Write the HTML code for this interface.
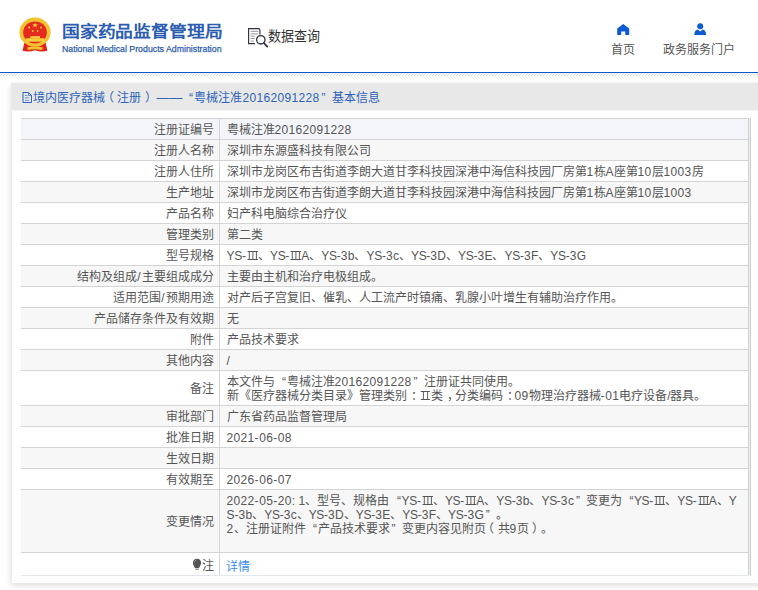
<!DOCTYPE html>
<html lang="zh-CN">
<head>
<meta charset="utf-8">
<style>
*{margin:0;padding:0;box-sizing:border-box}
html,body{width:758px;height:590px;overflow:hidden;background:#fff}
body{font-family:"Liberation Sans",sans-serif;color:#555;position:relative;text-spacing-trim:space-all}
.abs{position:absolute}
#hdr{position:absolute;left:0;top:0;width:758px;height:72px;background:#fff}
#blue{position:absolute;left:0;top:72px;width:758px;height:1px;background:#005bc5}

.title{position:absolute;left:62px;top:21px;font-size:18px;font-weight:bold;color:#2b5cb0;white-space:nowrap;line-height:24px;transform:scale(0.99,0.88);transform-origin:0 0}
.sub{position:absolute;left:62px;top:42.5px;font-size:9.6px;color:#2b5cb0;white-space:nowrap;line-height:12px;transform:scaleX(0.915);transform-origin:0 0;-webkit-text-stroke:0.25px #2b5cb0}
.sjcx{position:absolute;left:268px;top:26.5px;font-size:13px;transform:scaleY(1.06);transform-origin:0 0;color:#333;white-space:nowrap;line-height:18px}
.nav{position:absolute;font-size:12px;color:#555;white-space:nowrap;line-height:16px}
#panel{position:absolute;left:11px;top:83px;width:760px;height:500px;background:#fff;border-left:1px solid #ececec;box-shadow:0 1.5px 6px rgba(0,0,0,.15)}
#ph{position:absolute;left:-1px;top:0;width:761px;height:28px;background:#e8e8e8;border-bottom:1px solid #f4f6fa}
#ph .t{position:absolute;left:22px;top:7px;font-size:12px;color:#2d63b8;white-space:nowrap;line-height:16px}
table{position:absolute;left:21px;top:118px;border-collapse:collapse;width:728px;table-layout:fixed}
td{font-size:12px;line-height:14px;padding:4px 0 2px;white-space:nowrap;border-top:1px solid #d4d4d4;vertical-align:middle;overflow:hidden}
td.l{text-align:right;padding-right:5px;width:198px;border-right:1px solid #d4d4d4}
td.v{padding-left:7px}
tr.g td{background:#f7f7f7}
tr.h td{background:#f3f5fa}
tr.last td{border-bottom:1px solid #e3e7ee;padding-top:6px;padding-bottom:2px}
#rb1{position:absolute;left:748px;top:118px;width:1px;height:457px;background:#d0d0d0}
#rb1b{position:absolute;left:749px;top:118px;width:1px;height:457px;background:#e8ecf4}
#rb2{position:absolute;left:750px;top:118px;width:1px;height:458px;background:#d0d0d0}
a{color:#3b8cf2;text-decoration:none;position:relative;top:1px;left:-0.5px}
.dsh{display:inline-block;width:29.6px;padding-left:3.6px;font-size:12.8px}
.hq{display:inline-block;width:11.9px;text-align:right;padding-right:1.5px}
.lp{position:relative;left:-3.5px}
.rp{position:relative;left:3.5px}
.rn{display:inline-block;vertical-align:baseline}
.cp{position:relative;left:4px}
.sl{margin:0 0.8px}
.d{letter-spacing:0.33px}
.hy{letter-spacing:0.6px}
.ys{letter-spacing:-0.3px}
.lq{display:inline-block;width:12px;text-align:right;padding-right:0.5px}
.rq{display:inline-block;width:12px;text-align:left;padding-left:2px}
</style>
</head>
<body>
<div id="hdr">
  <svg class="abs" style="left:0;top:0" width="60" height="60" viewBox="0 0 60 60">
    <path d="M24.5 42 L22.6 50.8 Q29 52.5 35 50.2 Q41 52.5 47.4 50.8 L45.5 42 Z" fill="#e0251b"/>
    <ellipse cx="35" cy="32.2" rx="15.6" ry="14.6" fill="#f3c230"/>
    <ellipse cx="35" cy="32.4" rx="11.8" ry="11" fill="#e42a1f"/>
    <path d="M35.1 22.4 l0.75 1.9 h2.0 l-1.6 1.2 0.6 2 -1.75 -1.2 -1.75 1.2 0.6 -2 -1.6 -1.2 h2.0z" fill="#f6cf3a"/>
    <circle cx="29.2" cy="27.5" r="0.9" fill="#f6cf3a"/><circle cx="41" cy="27.5" r="0.9" fill="#f6cf3a"/>
    <circle cx="32.7" cy="31" r="0.9" fill="#f6cf3a"/><circle cx="37.6" cy="31" r="0.9" fill="#f6cf3a"/>
    <rect x="30.3" y="36.2" width="9.7" height="2.2" fill="#f6cf3a"/>
    <rect x="26.1" y="38.3" width="18.1" height="3.4" fill="#f6cf3a"/>
    <path d="M27 47.5 Q35 45.5 43 47.5 L42 50 Q35 48.5 28 50 Z" fill="#f3c230"/>
  </svg>
  <div class="title">国家药品监督管理局</div>
  <div class="sub">National Medical Products Administration</div>
  <svg class="abs" style="left:240px;top:20px" width="40" height="35" viewBox="240 20 40 35">
    <path d="M259.9 34.5 V30 Q259.9 28.6 258.5 28.6 H248.6 V43.6 H255" fill="none" stroke="#2e2f40" stroke-width="1.15"/>
    <path d="M250.6 31.3h7.6M250.6 33.9h7.6M250.6 36.2h4.2M250.6 38.5h4.2M250.6 41.1h3.2" stroke="#8a8a92" stroke-width="0.9"/>
    <circle cx="260.8" cy="39.8" r="4.2" fill="#fff" stroke="#2e2f40" stroke-width="1.3"/>
    <path d="M263.9 43 L267.2 46.6" stroke="#2e2f40" stroke-width="1.8" stroke-linecap="round"/>
  </svg>
  <div class="sjcx">数据查询</div>
  <svg class="abs" style="left:617px;top:24px" width="13" height="11" viewBox="0 0 13 11">
    <path d="M6.2 0 L12.2 4.5 V11 H8.2 V7.5 H4.2 V11 H0.2 V4.5 Z" fill="#0d5bd0"/>
  </svg>
  <div class="nav" style="left:611px;top:41.5px">首页</div>
  <svg class="abs" style="left:694px;top:23px" width="13" height="12" viewBox="0 0 13 12">
    <circle cx="6.2" cy="3.2" r="3" fill="#0d5bd0"/>
    <path d="M0.2 12 Q0.5 7 4 6.6 L6.2 8.5 L8.4 6.6 Q12 7 12.2 12Z" fill="#0d5bd0"/>
  </svg>
  <div class="nav" style="left:663px;top:41.5px">政务服务门户</div>
</div>
<div id="blue"></div>
<svg id="dash" style="position:absolute;left:0;top:73px" width="758" height="3"><defs><pattern id="dp" patternUnits="userSpaceOnUse" width="3" height="3"><path d="M0.2 3 L2.8 0.4" stroke="#c8c8c8" stroke-width="0.9"/></pattern></defs><rect x="0" y="0" width="758" height="3" fill="url(#dp)"/></svg>
<div id="panel">
  <div id="ph">
    <svg class="abs" style="left:7px;top:5px" width="16" height="20" viewBox="18 88 16 20">
      <path d="M23 92.5 H28.6 L31.5 95.4 V102.5 H23 Z" fill="none" stroke="#2a63c8" stroke-width="1"/>
      <path d="M28.6 92.5 V95.4 H31.5" fill="none" stroke="#2a63c8" stroke-width="0.8"/>
      <path d="M25 95.5h2.5M25 97.8h4M25 100.3h4" stroke="#6d86c4" stroke-width="0.9"/>
    </svg>
    <div class="t">境内医疗器械<span class="lp">（</span>注册<span class="rp">）</span><span class="dsh">——</span><span class="hq">“</span>粤械注准<span class="d">20162091228</span><span class="rq">”</span>基本信息</div>
  </div>
</div>
<table>
<tr class="h"><td class="l">注册证编号</td><td class="v">粤械注准<span class="d">20162091228</span></td></tr>
<tr class="g"><td class="l">注册人名称</td><td class="v">深圳市东源盛科技有限公司</td></tr>
<tr><td class="l">注册人住所</td><td class="v">深圳市龙岗区布吉街道李朗大道甘李科技园深港中海信科技园厂房第<span class="d">1</span>栋A座第<span class="d">10</span>层<span class="d">1003</span>房</td></tr>
<tr class="g"><td class="l">生产地址</td><td class="v">深圳市龙岗区布吉街道李朗大道甘李科技园深港中海信科技园厂房第<span class="d">1</span>栋A座第<span class="d">10</span>层<span class="d">1003</span></td></tr>
<tr><td class="l">产品名称</td><td class="v">妇产科电脑综合治疗仪</td></tr>
<tr class="g"><td class="l">管理类别</td><td class="v">第二类</td></tr>
<tr><td class="l">型号规格</td><td class="v"><span class="ys">YS</span>-<svg class="rn" width="12" height="9" viewBox="0 0 12 9"><path d="M1.6 0.5H11.9M1.6 8.5H11.9" stroke="#555" stroke-width="1"/><path d="M3.3 0.5V8.5M6.9 0.5V8.5M10.4 0.5V8.5" stroke="#555" stroke-width="0.95"/></svg>、<span class="ys">YS</span>-<svg class="rn" width="12" height="9" viewBox="0 0 12 9"><path d="M1.6 0.5H11.9M1.6 8.5H11.9" stroke="#555" stroke-width="1"/><path d="M3.3 0.5V8.5M6.9 0.5V8.5M10.4 0.5V8.5" stroke="#555" stroke-width="0.95"/></svg>A、<span class="ys">YS</span>-<span class="d">3</span>b、<span class="ys">YS</span>-<span class="d">3</span>c、<span class="ys">YS</span>-<span class="d">3</span>D、<span class="ys">YS</span>-<span class="d">3</span>E、<span class="ys">YS</span>-<span class="d">3</span>F、<span class="ys">YS</span>-<span class="d">3</span>G</td></tr>
<tr class="g"><td class="l">结构及组成<span class="sl">/</span>主要组成成分</td><td class="v">主要由主机和治疗电极组成。</td></tr>
<tr><td class="l">适用范围<span class="sl">/</span>预期用途</td><td class="v">对产后子宫复旧、催乳、人工流产时镇痛、乳腺小叶增生有辅助治疗作用。</td></tr>
<tr class="g"><td class="l">产品储存条件及有效期</td><td class="v">无</td></tr>
<tr><td class="l">附件</td><td class="v">产品技术要求</td></tr>
<tr class="g"><td class="l">其他内容</td><td class="v">/</td></tr>
<tr><td class="l">备注</td><td class="v">本文件与<span class="lq">“</span>粤械注准<span class="d">20162091228</span><span class="rq">”</span>注册证共同使用。<br>新《医疗器械分类目录》管理类别<span class="cp">：</span><svg class="rn" width="12" height="9" viewBox="0 0 12 9"><path d="M1.8 0.5H10.9M1.8 8.5H10.9" stroke="#555" stroke-width="1"/><path d="M4.4 0.5V8.5M8.6 0.5V8.5" stroke="#555" stroke-width="0.95"/></svg>类<span class="cp">，</span>分类编码<span class="cp">：</span><span class="d">09</span>物理治疗器械<span class="hy">-</span><span class="d">01</span>电疗设备/器具。</td></tr>
<tr class="g"><td class="l">审批部门</td><td class="v">广东省药品监督管理局</td></tr>
<tr><td class="l">批准日期</td><td class="v"><span class="d">2021</span><span class="hy">-</span><span class="d">06</span><span class="hy">-</span><span class="d">08</span></td></tr>
<tr class="g"><td class="l">生效日期</td><td class="v"></td></tr>
<tr><td class="l">有效期至</td><td class="v"><span class="d">2026</span><span class="hy">-</span><span class="d">06</span><span class="hy">-</span><span class="d">07</span></td></tr>
<tr class="g"><td class="l">变更情况</td><td class="v"><span class="d">2022</span><span class="hy">-</span><span class="d">05</span><span class="hy">-</span><span class="d">20</span>: <span class="d">1</span>、型号、规格由<span class="lq">“</span><span class="ys">YS</span>-<svg class="rn" width="12" height="9" viewBox="0 0 12 9"><path d="M1.6 0.5H11.9M1.6 8.5H11.9" stroke="#555" stroke-width="1"/><path d="M3.3 0.5V8.5M6.9 0.5V8.5M10.4 0.5V8.5" stroke="#555" stroke-width="0.95"/></svg>、<span class="ys">YS</span>-<svg class="rn" width="12" height="9" viewBox="0 0 12 9"><path d="M1.6 0.5H11.9M1.6 8.5H11.9" stroke="#555" stroke-width="1"/><path d="M3.3 0.5V8.5M6.9 0.5V8.5M10.4 0.5V8.5" stroke="#555" stroke-width="0.95"/></svg>A、<span class="ys">YS</span>-<span class="d">3</span>b、<span class="ys">YS</span>-<span class="d">3</span>c<span class="rq">”</span>变更为<span class="lq">“</span><span class="ys">YS</span>-<svg class="rn" width="12" height="9" viewBox="0 0 12 9"><path d="M1.6 0.5H11.9M1.6 8.5H11.9" stroke="#555" stroke-width="1"/><path d="M3.3 0.5V8.5M6.9 0.5V8.5M10.4 0.5V8.5" stroke="#555" stroke-width="0.95"/></svg>、<span class="ys">YS</span>-<svg class="rn" width="12" height="9" viewBox="0 0 12 9"><path d="M1.6 0.5H11.9M1.6 8.5H11.9" stroke="#555" stroke-width="1"/><path d="M3.3 0.5V8.5M6.9 0.5V8.5M10.4 0.5V8.5" stroke="#555" stroke-width="0.95"/></svg>A、Y<br>S-<span class="d">3</span>b、<span class="ys">YS</span>-<span class="d">3</span>c、<span class="ys">YS</span>-<span class="d">3</span>D、<span class="ys">YS</span>-<span class="d">3</span>E、<span class="ys">YS</span>-<span class="d">3</span>F、<span class="ys">YS</span>-<span class="d">3</span>G<span class="rq">”</span>。<br><span class="d">2</span>、注册证附件<span class="lq">“</span>产品技术要求<span class="rq">”</span>变更内容见附页<span class="lp">（</span>共<span class="d">9</span>页<span class="rp">）</span>。<br>&nbsp;</td></tr>
<tr class="last"><td class="l"><svg width="10" height="12" viewBox="190 558 10 12" style="display:inline-block;vertical-align:top;position:relative;top:-1px;left:1px;margin-right:0.5px"><path d="M195 558.8 C192.4 558.8 190.9 560.6 190.9 562.9 C190.9 565.2 192.6 566.3 193 568.2 H197 C197.4 566.3 199.1 565.2 199.1 562.9 C199.1 560.6 197.6 558.8 195 558.8Z" fill="#555"/><path d="M193.3 569.4 H196.7" stroke="#777" stroke-width="0.8"/><path d="M192.3 562.5 Q192.6 560.5 194.3 560" stroke="#bbb" stroke-width="0.6" fill="none"/></svg>注</td><td class="v"><a>详情</a></td></tr>
</table>
<div id="rb1"></div><div id="rb1b"></div><div id="rb2"></div>
</body>
</html>
